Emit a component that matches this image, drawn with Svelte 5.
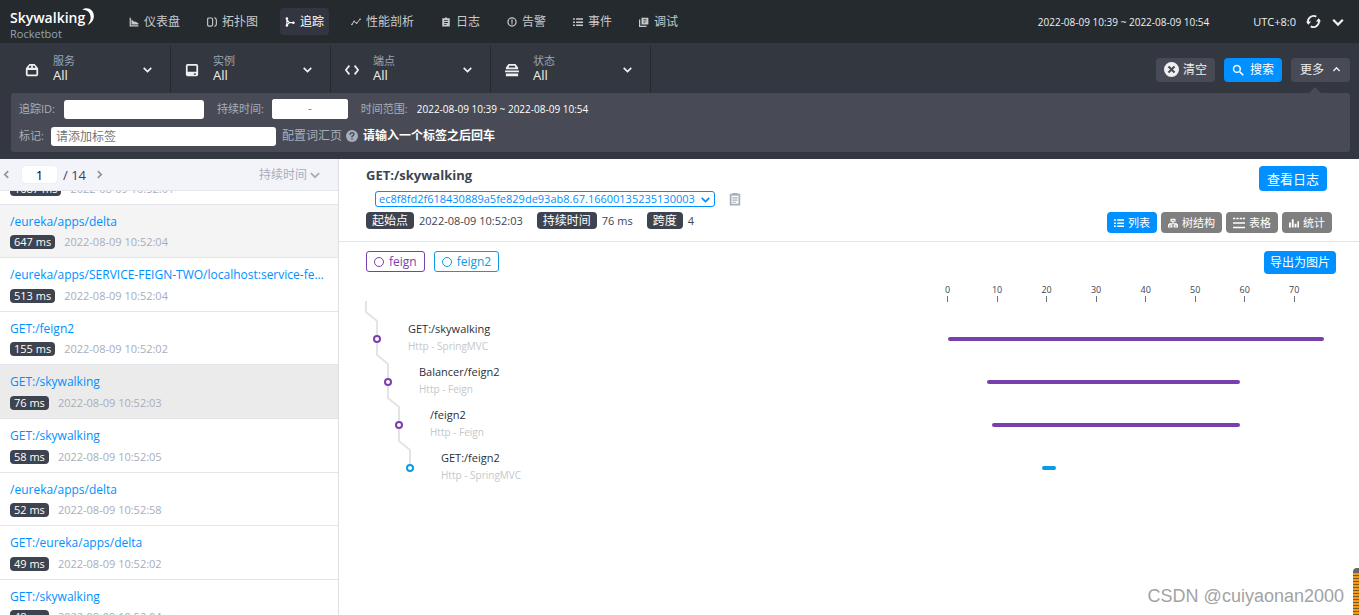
<script lang="ts">
    import { onMount } from 'svelte';

    const ROW_OFFSET = 40;
    const DURATION = 76;
    const INDENT = 11;

    const nav = [
        { label: '仪表盘', icon: 'chart' },
        { label: '拓扑图', icon: 'topology' },
        { label: '追踪', icon: 'trace' },
        { label: '性能剖析', icon: 'profile' },
        { label: '日志', icon: 'log' },
        { label: '告警', icon: 'alarm' },
        { label: '事件', icon: 'event' },
        { label: '调试', icon: 'debug' },
    ];

    const filters = [
        { id: 'service', label: '服务', icon: 'package' },
        { id: 'instance', label: '实例', icon: 'disk' },
        { id: 'endpoint', label: '端点', icon: 'code' },
        { id: 'status', label: '状态', icon: 'stack' },
    ];

    const traces = [
        { name: '/eureka/apps/delta', cost: 1687, time: '2022-08-09 10:52:01' },
        { name: '/eureka/apps/delta', cost: 647, time: '2022-08-09 10:52:04', hover: true },
        { name: '/eureka/apps/SERVICE-FEIGN-TWO/localhost:service-feign-two:8081', cost: 513, time: '2022-08-09 10:52:04' },
        { name: 'GET:/feign2', cost: 155, time: '2022-08-09 10:52:02' },
        { name: 'GET:/skywalking', cost: 76, time: '2022-08-09 10:52:03' },
        { name: 'GET:/skywalking', cost: 58, time: '2022-08-09 10:52:05' },
        { name: '/eureka/apps/delta', cost: 52, time: '2022-08-09 10:52:58' },
        { name: 'GET:/eureka/apps/delta', cost: 49, time: '2022-08-09 10:52:02' },
        { name: 'GET:/skywalking', cost: 48, time: '2022-08-09 10:52:04' },
    ];

    const views = [
        { label: '列表', icon: 'list' },
        { label: '树结构', icon: 'tree' },
        { label: '表格', icon: 'table' },
        { label: '统计', icon: 'stats' },
    ];

    const purple = '#7a3fae';
    const cyan = '#0b9ae3';

    const services = [
        { name: 'feign', color: purple },
        { name: 'feign2', color: cyan },
    ];

    const spans = [
        { name: 'GET:/skywalking', layer: 'Http - SpringMVC', start: 0, end: 76, color: purple },
        { name: 'Balancer/feign2', layer: 'Http - Feign', start: 8, end: 59, color: purple },
        { name: '/feign2', layer: 'Http - Feign', start: 9, end: 59, color: purple },
        { name: 'GET:/feign2', layer: 'Http - SpringMVC', start: 19, end: 22, color: cyan },
    ];

    const ticks = [0, 10, 20, 30, 40, 50, 60, 70];

    let current = $state(4);
    let view = $state(0);
    let listEl: HTMLElement;

    const percent = (value: number) => `${(value / DURATION) * 100}%`;

    onMount(() => {
        listEl.scrollTop = ROW_OFFSET;
    });
</script>

{#snippet icon(name: string, size = 12)}
    <svg class="icon" width={size} height={size} viewBox="0 0 16 16" fill="currentColor" aria-hidden="true">
        {#if name === 'chart'}
            <path d="M1 1h2v12h12v2H1zM4 4l5 4 1-1 5 3v2H4z" />
        {:else if name === 'topology'}
            <path d="M3 1.500h4q2 0 2 2v9q0 2-2 2H3q-2 0-2-2v-9q0-2 2-2z" fill="none" stroke="currentColor" stroke-width="1.800" />
            <path d="M12 1q3 1 3 4v6q0 3-3 4" fill="none" stroke="currentColor" stroke-width="1.800" />
        {:else if name === 'trace'}
            <path d="M3 3v11M3 4l4 5h6M3 13l4-4" fill="none" stroke="currentColor" stroke-width="1.8" />
            <circle cx="3" cy="2.5" r="2" /><circle cx="3" cy="13.5" r="2" /><circle cx="13.5" cy="9" r="2" />
        {:else if name === 'profile'}
            <path d="M1 12l4-5 4 3 6-7" fill="none" stroke="currentColor" stroke-width="1.6" />
            <circle cx="1.5" cy="12" r="1.3" /><circle cx="5" cy="7" r="1.3" /><circle cx="9" cy="10" r="1.3" /><circle cx="14.5" cy="3.5" r="1.3" />
        {:else if name === 'log'}
            <path fill-rule="evenodd" d="M2 2h4q2-3 4 0h4v13H2zM5 5v1.500h6V5zM5 8v1.500h6V8zM5 11v1.500h4V11z" />
        {:else if name === 'alarm'}
            <circle cx="8" cy="8" r="6.500" fill="none" stroke="currentColor" stroke-width="2" />
            <path d="M7 4h2v5H7zM7 10h2v2H7z" />
        {:else if name === 'event' || name === 'list'}
            <path d="M0 2h3v2.500H0zM5 2h11v2.500H5zM0 7h3v2.500H0zM5 7h11v2.500H5zM0 12h3v2.500H0zM5 12h11v2.500H5z" />
        {:else if name === 'debug'}
            <path d="M4 1h11v11H4zM0 4h2v10h10v2H0z" />
            <path d="M7 4h5M7 6.500h5M7 9h3" stroke="#252a2f" />
        {:else if name === 'package'}
            <path fill-rule="evenodd" d="M5 1h6l4 5v7q0 2-2 2H3q-2 0-2-2V6zM5.500 3L4 5.500h3V3zM9 3v2.500h3L10.500 3zM3 8v5h10V8z" />
        {:else if name === 'disk'}
            <path fill-rule="evenodd" d="M3 1h10q2 0 2 2v10q0 2-2 2H3q-2 0-2-2V3q0-2 2-2zM3 3v7h10V3zM10 12v1.500h2.500V12z" />
        {:else if name === 'code'}
            <path d="M5 3L1 8l4 5M11 3l4 5-4 5" fill="none" stroke="currentColor" stroke-width="2" />
        {:else if name === 'stack'}
            <path fill-rule="evenodd" d="M4 1h8l3 4v2H1V5zM5 3L4 5h8l-1-2zM0 8.500h16v2H0zM1 12h14v3H1z" />
        {:else if name === 'down'}
            <path d="M2.500 5.500L8 11l5.500-5.500" fill="none" stroke="currentColor" stroke-width="2.500" />
        {:else if name === 'up'}
            <path d="M2.500 10.500L8 5l5.500 5.500" fill="none" stroke="currentColor" stroke-width="2.500" />
        {:else if name === 'left'}
            <path d="M11 2L5 8l6 6" fill="none" stroke="currentColor" stroke-width="3" />
        {:else if name === 'right'}
            <path d="M5 2l6 6-6 6" fill="none" stroke="currentColor" stroke-width="3" />
        {:else if name === 'reload'}
            <path d="M2.500 10A6 6 0 0 1 11 2.800M13.500 6A6 6 0 0 1 5 13.200" fill="none" stroke="currentColor" stroke-width="2" />
            <path d="M10.500 8h5.500L13.500 4.500zM5.500 8H0l2.500 3.500z" />
        {:else if name === 'clear'}
            <path fill-rule="evenodd" d="M8 0a8 8 0 1 0 0 16A8 8 0 0 0 8 0zM5.500 4L8 6.500 10.500 4 12 5.500 9.500 8l2.500 2.500-1.500 1.500L8 9.500 5.500 12 4 10.500 6.500 8 4 5.500z" />
        {:else if name === 'search'}
            <path d="M10 10l5 5" stroke="currentColor" stroke-width="2.200" />
            <circle cx="6.500" cy="6.500" r="4.500" fill="none" stroke="currentColor" stroke-width="2" />
        {:else if name === 'help'}
            <circle cx="8" cy="8" r="8" />
            <path d="M5.500 6.500q0-3 2.500-3t2.500 2.300Q10.500 7.500 8 8.500V10M8 11.300v1.800" fill="none" stroke="#484b55" stroke-width="1.800" />
        {:else if name === 'clipboard'}
            <path d="M3 3h10v11.500H3z" fill="none" stroke="currentColor" stroke-width="2" stroke-linejoin="round" />
            <path d="M5 1h6v3H5zM5 6h6v1.400H5zM5 8.600h6V10H5zM5 11h4v1.400H5z" />
        {:else if name === 'tree'}
            <path fill-rule="evenodd" d="M4 1h8v5H9v2h5v2h2v5H9v-5h3V9H4v1h3v5H0v-5h2V8h5V6H4zM6 3v1.500h4V3zM2 12v1.500h3V12zM11 12v1.500h3V12z" />
        {:else if name === 'table'}
            <path d="M0 1h3v2H0zM4.500 1h3v2h-3zM9 1h3v2H9zM13 1h3v2h-3zM0 7h16v2H0zM0 13h16v2H0z" />
        {:else if name === 'stats'}
            <path d="M0 7h3v8H0zM4.500 2h3v13h-3zM9 9h3v6H9zM13.500 5H16v10h-2.500z" />
        {/if}
    </svg>
{/snippet}

<div class="app">
    <header class="header">
        <div class="logo">
            <div class="logo__name">
                <span>Skywalking</span>
                <svg class="logo__moon" width="13" height="17" viewBox="0 0 14 19" aria-hidden="true">
                    <path d="M0 2C6-2 13 2 13 9c0 5-3 8-7 10 3-4 4-7 3-11C8 4 4 2 0 2z" fill="#fff" />
                </svg>
            </div>
            <div class="logo__sub">Rocketbot</div>
        </div>
        <nav class="nav">
            {#each nav as item, i}
                <a href="#{item.icon}" class="nav__item" class:is-active={i === 2}>
                    {@render icon(item.icon, 10)}
                    {item.label}
                </a>
            {/each}
        </nav>
        <div class="header__tools">
            <button class="header__time">2022-08-09 10:39 ~ 2022-08-09 10:54</button>
            <span class="header__utc">UTC+8:0</span>
            <button aria-label="reload">{@render icon('reload', 15)}</button>
            <button aria-label="more">{@render icon('down', 14)}</button>
        </div>
    </header>

    <section class="tool">
        <div class="tool__bar">
            {#each filters as filter}
                <div class="filter">
                    {@render icon(filter.icon, 14)}
                    <div class="filter__body">
                        <label for={filter.id}>{filter.label}</label>
                        <select id={filter.id}>
                            <option>All</option>
                        </select>
                    </div>
                    {@render icon('down', 11)}
                </div>
            {/each}
            <div class="tool__actions">
                <button class="btn">{@render icon('clear', 15)}清空</button>
                <button class="btn btn--blue">{@render icon('search', 12)}搜索</button>
                <button class="btn btn--more">更多{@render icon('up', 9)}</button>
            </div>
        </div>
        <div class="more">
            <div class="more__row">
                <label for="trace-id">追踪ID:</label>
                <input id="trace-id" class="more__trace" type="text" />
                <span class="more__label" id="cost-label">持续时间:</span>
                <div class="range" role="group" aria-labelledby="cost-label">
                    <input type="text" aria-label="min" />
                    <span>-</span>
                    <input type="text" aria-label="max" />
                </div>
                <span class="more__label">时间范围:</span>
                <span class="more__time">2022-08-09 10:39 ~ 2022-08-09 10:54</span>
            </div>
            <div class="more__row">
                <label for="tags">标记:</label>
                <input id="tags" class="more__tags" type="text" placeholder="请添加标签" />
                <a href="#vocabulary" class="more__link">配置词汇页 {@render icon('help', 12)}</a>
                <b>请输入一个标签之后回车</b>
            </div>
        </div>
    </section>

    <main class="body">
        <aside class="side">
            <div class="side__header">
                <button aria-label="previous">{@render icon('left', 9)}</button>
                <input type="text" value="1" aria-label="page" />
                <span class="side__total">/ 14</span>
                <button aria-label="next">{@render icon('right', 9)}</button>
                <button class="side__sort">持续时间{@render icon('down', 12)}</button>
            </div>
            <div class="side__list" bind:this={listEl}>
                {#each traces as trace, i}
                    <button
                        class="trace"
                        class:is-hover={trace.hover}
                        class:is-active={i === current}
                        onclick={() => (current = i)}
                    >
                        <span class="trace__name">{trace.name}</span>
                        <span class="trace__info">
                            <span class="tag">{trace.cost} ms</span>
                            <span>{trace.time}</span>
                        </span>
                    </button>
                {/each}
            </div>
        </aside>

        <section class="detail">
            <div class="detail__header">
                <div class="detail__row">
                    <h1>GET:/skywalking</h1>
                    <button class="btn btn--blue btn--log">查看日志</button>
                </div>
                <div class="detail__id">
                    <div class="id-select">
                        <select aria-label="trace id">
                            <option>ec8f8fd2f618430889a5fe829de93ab8.67.16600135235130003</option>
                        </select>
                        {@render icon('down', 11)}
                    </div>
                    <button aria-label="copy">{@render icon('clipboard', 14)}</button>
                </div>
                <div class="detail__row detail__row--info">
                    <span class="tag tag--cn">起始点</span>
                    <span class="detail__value">2022-08-09 10:52:03</span>
                    <span class="tag tag--cn">持续时间</span>
                    <span class="detail__value">76 ms</span>
                    <span class="tag tag--cn">跨度</span>
                    <span class="detail__value">4</span>
                    <div class="views">
                        {#each views as item, i}
                            <button class:is-active={i === view} onclick={() => (view = i)}>
                                {@render icon(item.icon, item.icon === 'table' ? 12 : 10)}
                                {item.label}
                            </button>
                        {/each}
                    </div>
                </div>
            </div>

            <div class="chart">
                <div class="legend">
                    {#each services as service}
                        <span class="legend__item" style="color: {service.color}">
                            <i></i>{service.name}
                        </span>
                    {/each}
                    <button class="btn btn--blue btn--export">导出为图片</button>
                </div>
                <div class="axis">
                    <div class="scale">
                        {#each ticks as tick}
                            <span class="tick" style="left: {percent(tick)}">{tick}</span>
                        {/each}
                    </div>
                </div>
                {#each spans as span, i}
                    <div class="span">
                        <div class="span__tree" style="padding-left: {(i + 1) * INDENT}px">
                            <svg width="1" height="1" viewBox="0 -1 1 1" aria-hidden="true">
                                <path d={i ? 'M-11 -39V-27L0 -18V-4' : 'M-11 -38V-27L0 -18V-4'} />
                                <circle r="3" stroke={span.color} />
                            </svg>
                            <div class="span__text">
                                <div class="span__name">{span.name}</div>
                                <div class="span__layer">{span.layer}</div>
                            </div>
                        </div>
                        <div class="scale">
                            <div
                                class="bar"
                                style="margin-left: {percent(span.start)}; width: {percent(span.end - span.start)}; background: {span.color}"
                            ></div>
                        </div>
                    </div>
                {/each}
            </div>
        </section>
    </main>

    <div class="watermark">CSDN @cuiyaonan2000</div>
    <div class="handle"></div>
</div>

<style>
    :global(body) {
        margin: 0;
    }

    .app {
        position: relative;
        display: flex;
        flex-direction: column;
        height: 100vh;
        overflow: hidden;
        font: 12px/16px "Open Sans", "Noto Sans CJK SC", sans-serif;
        color: #3d444f;
        background: #fff;
    }

    .app :is(button, input, select) {
        font-family: inherit;
        font-size: 12px;
        line-height: 16px;
        box-sizing: border-box;
        margin: 0;
        padding: 0;
        border: 0;
        outline: 0;
    }

    button {
        display: inline-flex;
        align-items: center;
        color: inherit;
        background: none;
        cursor: pointer;
        white-space: nowrap;
    }

    select {
        appearance: none;
        background: none;
        color: inherit;
    }

    .icon {
        flex: none;
    }

    /* header */
    .header {
        display: flex;
        align-items: center;
        height: 43px;
        flex: none;
        padding: 0 14px 0 10px;
        color: #efeff1;
        background: #252a2f;
    }

    .logo {
        width: 114px;
        padding-top: 5px;
    }

    .logo__name {
        display: flex;
        height: 20px;
        font-size: 14px;
        line-height: 20px;
        font-weight: 600;
        color: #fff;
    }

    .logo__moon {
        margin-left: -3px;
    }

    .logo__sub {
        font-size: 11px;
        line-height: 12px;
        color: #93a5b1;
    }

    .nav {
        display: flex;
        gap: 17px;
    }

    .nav__item {
        display: flex;
        align-items: center;
        gap: 5px;
        height: 27px;
        padding: 0 5px;
        border-radius: 4px;
        color: #c8c9cb;
        text-decoration: none;
        white-space: nowrap;
    }

    .nav__item.is-active {
        color: #fff;
        background: #333641;
    }

    .header__tools {
        display: flex;
        align-items: center;
        gap: 10px;
        margin-left: auto;
    }

    .app .header__time {
        margin-right: 34px;
        font-size: 10px;
    }

    .header__utc {
        font-size: 11px;
    }

    /* condition bar */
    .tool {
        flex: none;
        padding: 3px 9px 7px 0;
        background: #333840;
    }

    .tool__bar {
        display: flex;
        height: 47px;
    }

    .filter {
        display: flex;
        align-items: center;
        width: 160px;
        box-sizing: border-box;
        padding: 0 17px 0 14px;
        border-right: 1px solid #252a2f;
        color: #efeff1;
    }

    .filter:first-child {
        width: 171px;
        padding-left: 25px;
    }

    .filter__body {
        display: flex;
        flex-direction: column;
        flex: 1;
        margin-left: 14px;
        padding-bottom: 4px;
    }

    .filter__body label {
        font-size: 11px;
        line-height: 14px;
        color: #9aa4b3;
    }

    .app .filter__body select {
        font-size: 13px;
        line-height: 14px;
        height: 14px;
        width: 80px;
    }

    .tool__actions {
        display: flex;
        align-items: center;
        gap: 9px;
        margin-left: auto;
    }

    .app .btn {
        justify-content: center;
        gap: 4px;
        height: 24px;
        padding: 0 8px;
        border-radius: 4px;
        color: #efeff1;
        background: #484b55;
    }

    .app .btn--blue {
        gap: 6px;
        padding: 0 8px;
        color: #fff;
        background: #0090ff;
    }

    .app .btn--more {
        position: relative;
        gap: 8px;
        width: 59px;
    }

    .btn--more::after {
        content: '';
        position: absolute;
        top: 29px;
        left: 17px;
        border: 7px solid transparent;
        border-top: 0;
        border-bottom-color: #484b55;
    }

    .more {
        display: flex;
        flex-direction: column;
        gap: 7px;
        margin-left: 11px;
        padding: 6px 8px;
        border-radius: 3px;
        background: #484b55;
    }

    .more__row {
        display: flex;
        align-items: center;
        height: 20px;
        color: #fff;
    }

    .more label,
    .more__label {
        font-size: 11px;
        color: #a7aebb;
    }

    .more input {
        height: 19px;
        padding: 0 5px;
        border-radius: 3px;
        background: #fff;
    }

    .more .more__trace {
        width: 140px;
        margin: 0 13px 0 9px !important;
    }

    .range {
        display: flex;
        align-items: center;
        width: 76px;
        margin: 0 13px 0 8px;
        border-radius: 3px;
        color: #888;
        background: #fff;
    }

    .range input {
        flex: 1;
        min-width: 0;
        height: 20px;
    }

    .more__time {
        margin-left: 9px;
        font-size: 10px;
    }

    .more__tags {
        width: 225px;
        margin: 0 6px 0 7px !important;
    }

    .more__tags::placeholder {
        color: #757575;
    }

    .more__link {
        display: flex;
        align-items: center;
        gap: 4px;
        margin-right: 5px;
        color: #a7aebb;
        text-decoration: none;
    }

    /* trace list */
    .body {
        display: flex;
        flex: 1;
        min-height: 0;
    }

    .side {
        display: flex;
        flex-direction: column;
        flex: none;
        width: 338px;
        border-right: 1px solid #dfe0e4;
    }

    .side__header {
        display: flex;
        align-items: center;
        height: 31px;
        flex: none;
        padding: 0 17px 0 2px;
        border-bottom: 1px solid #e3e5ea;
        background: #f3f4f9;
    }

    .side__header button {
        color: #8b929c;
    }

    .app .side__header input {
        width: 35px;
        height: 17px;
        margin: 0 6px 0 11px;
        border-radius: 3px;
        font-size: 13px;
        text-align: center;
        background: #fff;
        box-shadow: 0 0 1px #c4c8d0;
    }

    .side__total {
        margin-right: 9px;
        font-size: 13px;
    }

    .side__header .side__sort {
        gap: 2px;
        margin-left: auto;
        color: #a7aebb;
    }

    .side__list {
        flex: 1;
        overflow: auto;
        scrollbar-width: none;
    }

    .trace {
        display: block;
        width: 100%;
        text-align: left;
    }

    .app .trace {
        padding: 9px 13px 8px 10px;
        border-bottom: 1px solid #e3e5ea;
    }

    .trace.is-hover {
        background: #f4f4f4;
    }

    .trace.is-active {
        background: #ebebeb;
    }

    .trace__name {
        display: block;
        overflow: hidden;
        font-size: 12px;
        line-height: 1.3;
        color: #0090ff;
        text-overflow: ellipsis;
    }

    .trace__info {
        display: flex;
        align-items: center;
        gap: 9px;
        height: 14px;
        margin-top: 6px;
        font-size: 11px;
        color: #a7aebb;
    }

    .tag {
        padding: 0 4px;
        border-radius: 4px;
        font-size: 11px;
        line-height: 14px;
        color: #fff;
        background: #3d444f;
    }

    .tag--cn {
        padding: 0 6px;
        font-size: 12px;
        line-height: 17px;
    }

    /* trace detail */
    .detail {
        flex: 1;
        min-width: 0;
    }

    .detail__header {
        padding: 7px 27px 8px;
        border-bottom: 1px solid #e3e4e6;
    }

    .detail__row {
        display: flex;
        align-items: flex-start;
        justify-content: space-between;
        height: 25px;
    }

    .detail__row h1 {
        margin: 0;
        font-size: 13px;
        line-height: 18px;
        font-weight: 700;
    }

    .app .btn--log {
        height: 25px;
        margin-right: 5px;
        font-size: 13px;
    }

    .detail__id {
        display: flex;
        align-items: center;
        gap: 13px;
        height: 16px;
        margin-left: 9px;
        color: #a7aebb;
    }

    .id-select {
        display: flex;
        align-items: center;
        height: 16px;
        box-sizing: border-box;
        padding-right: 3px;
        border: 1px solid #0090ff;
        border-radius: 3px;
        color: #0090ff;
    }

    .app .id-select select {
        width: 324px;
        height: 14px;
        padding-left: 3px;
        font-size: 11px;
        line-height: 14px;
    }

    .detail__row--info {
        justify-content: flex-start;
        height: 21px;
        margin-top: 5px;
        font-size: 11px;
    }

    .detail__value {
        margin: 0 14px 0 5px;
        line-height: 17px;
    }

    .views {
        display: flex;
        gap: 4px;
        margin-left: auto;
    }

    .app .views button {
        gap: 4px;
        height: 21px;
        padding: 0 7px;
        border-radius: 4px;
        font-size: 11px;
        color: #fff;
        background: #7f7f7f;
    }

    .app .views .is-active {
        background: #0090ff;
    }

    .chart {
        padding: 9px 23px 0 27px;
    }

    .legend {
        display: flex;
        gap: 9px;
        height: 23px;
    }

    .legend__item {
        display: flex;
        align-items: center;
        gap: 5px;
        height: 19px;
        padding: 0 7px;
        border: 1px solid currentColor;
        border-radius: 3px;
    }

    .legend__item i {
        width: 8px;
        height: 8px;
        border: 1px solid currentColor;
        border-radius: 50%;
    }

    .app .btn--export {
        height: 23px;
        margin-left: auto;
        padding: 0 6px;
    }

    .axis {
        display: flex;
        justify-content: flex-end;
        height: 43px;
        padding-right: 12px;
    }

    .scale {
        position: relative;
        width: 39.3%;
    }

    .tick {
        position: absolute;
        top: 10px;
        width: 20px;
        margin-left: -10px;
        font-size: 9px;
        line-height: 12px;
        text-align: center;
    }

    .tick::after {
        content: '';
        display: block;
        width: 1px;
        height: 6px;
        margin: 0 auto;
        background: #6d727a;
    }

    .span {
        display: flex;
        align-items: center;
        height: 43px;
        padding-right: 12px;
    }

    .span__tree {
        display: flex;
        align-items: center;
        flex: 1;
    }

    .span__tree svg {
        overflow: visible;
        fill: none;
    }

    .span__tree path {
        stroke: #e3e4e6;
        stroke-width: 2;
    }

    .span__tree circle {
        stroke-width: 2;
    }

    .span__text {
        margin-left: 30px;
        padding-bottom: 4px;
    }

    .span__name {
        font-size: 11px;
        line-height: 18px;
        color: #2b2f36;
    }

    .span__layer {
        font-size: 10px;
        line-height: 16px;
        color: #c6c7ca;
    }

    .bar {
        height: 4px;
        border-radius: 2px;
    }

    /* page corner */
    .watermark {
        position: absolute;
        right: 15px;
        bottom: 7px;
        font: 18px/24px "Liberation Sans", sans-serif;
        color: #a3a3a3;
    }

    .handle {
        position: absolute;
        right: 0;
        bottom: 0;
        width: 6px;
        height: 42px;
        border-top: 5px solid #666;
        border-radius: 4px 0 0 0;
        background: repeating-linear-gradient(#f59a14 0 2px, #7d5a25 2px 3px);
    }
</style>
